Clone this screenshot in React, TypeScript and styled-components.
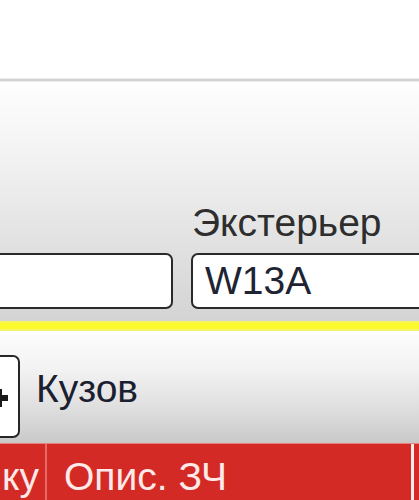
import styled, { createGlobalStyle } from "styled-components";

const GlobalStyle = createGlobalStyle`
  html, body {
    margin: 0;
    padding: 0;
  }
  body {
    background: #fff;
    font-family: "Liberation Sans", Arial, sans-serif;
  }
`;

type Column = { title: string; width?: number; align?: "left" | "right" };

const columns: Column[] = [
  { title: "ку", width: 47, align: "right" },
  { title: "Опис. ЗЧ", width: 367 },
  { title: "" },
];

export default function App() {
  return (
    <>
      <GlobalStyle />
      <Screen>
        <TopArea />
        <Rule />
        <FilterPanel>
          <Field>
            <TextInput readOnly value="" />
          </Field>
          <Field $shift={18}>
            <Label>Экстерьер</Label>
            <TextInput readOnly value="W13A" $wide />
          </Field>
        </FilterPanel>
        <Stripe />
        <TreePanel>
          <TreeNode>
            <Expander>
              <svg width="18" height="18" viewBox="0 0 18 18">
                <rect x="0" y="6" width="18" height="6" fill="#1a1a1a" />
                <rect x="6" y="0" width="6" height="18" fill="#1a1a1a" />
              </svg>
            </Expander>
            <NodeTitle>Кузов</NodeTitle>
          </TreeNode>
        </TreePanel>
        <GridHeader>
          {columns.map((c, i) => (
            <HeaderCell key={i} $width={c.width} $align={c.align} $last={i === columns.length - 1}>
              {c.title}
            </HeaderCell>
          ))}
        </GridHeader>
      </Screen>
    </>
  );
}

const Screen = styled.div`
  width: 419px;
  height: 500px;
  overflow: hidden;
  display: flex;
  flex-direction: column;
`;

const TopArea = styled.div`
  height: 78px;
  flex-shrink: 0;
  background: #fff;
`;

const Rule = styled.div`
  height: 2px;
  flex-shrink: 0;
  background: #d3d3d3;
  border-top: 1px solid #ececec;
  border-bottom: 1px solid #ececec;
`;

const FilterPanel = styled.div`
  height: 239px;
  flex-shrink: 0;
  box-sizing: border-box;
  padding-bottom: 12px;
  display: flex;
  align-items: flex-end;
  background: linear-gradient(#fefefe 0%, #f5f5f5 25%, #e7e7e7 55%, #dcdcdc 80%, #d4d4d4 100%);
`;

const Field = styled.div<{ $shift?: number }>`
  display: flex;
  flex-direction: column;
  flex-shrink: 0;
  margin-left: ${({ $shift }) => ($shift !== undefined ? `${$shift}px` : "-27px")};
`;

const Label = styled.div`
  font-size: 39px;
  line-height: 44px;
  height: 44px;
  margin-bottom: 8px;
  padding-left: 1px;
  color: #2e2e2e;
  white-space: nowrap;
`;

const TextInput = styled.input<{ $wide?: boolean }>`
  box-sizing: border-box;
  width: ${({ $wide }) => ($wide ? "260px" : "200px")};
  height: 56px;
  padding: 0 0 0 12px;
  border: 2px solid #2a2a2a;
  border-radius: 7px;
  background: #fff;
  font-family: "Liberation Sans", Arial, sans-serif;
  font-size: 39px;
  line-height: 52px;
  color: #1f2433;
  outline: none;
`;

const Stripe = styled.div`
  height: 10px;
  flex-shrink: 0;
  background: linear-gradient(#f4f46a, #fbfb2c 30%, #fbfb2c 70%, #f2f27a);
`;

const TreePanel = styled.div`
  height: 112px;
  flex-shrink: 0;
  box-sizing: border-box;
  padding-top: 24px;
  background: linear-gradient(#fdfdfd 0%, #f2f2f2 35%, #dedede 70%, #c9c9c9 100%);
`;

const TreeNode = styled.div`
  display: flex;
  align-items: flex-start;
  gap: 16px;
`;

const Expander = styled.div`
  box-sizing: border-box;
  width: 43px;
  height: 83px;
  margin-left: -23px;
  flex-shrink: 0;
  border: 2px solid #262626;
  border-radius: 7px;
  background: #fff;
  display: flex;
  align-items: center;
  justify-content: center;
  padding-top: 3px;
`;

const NodeTitle = styled.div`
  margin-top: 12px;
  font-size: 39px;
  line-height: 44px;
  color: #1b2030;
`;

const GridHeader = styled.div`
  flex: 1;
  display: flex;
  background: #d42a25;
  border-top: 1px solid #e8807c;
`;

const HeaderCell = styled.div<{ $width?: number; $align?: "left" | "right"; $last?: boolean }>`
  box-sizing: border-box;
  ${({ $width }) => ($width ? `width: ${$width}px; flex-shrink: 0;` : "flex: 1;")}
  padding: 11px ${({ $align }) => ($align === "right" ? "6px" : "0")} 0 ${({ $align }) => ($align === "right" ? "0" : "17px")};
  text-align: ${({ $align }) => $align ?? "left"};
  border-right: ${({ $last, $width }) => ($last ? "none" : $width && $width > 100 ? "3px solid #fbeaea" : "2px solid #e66a65")};
  font-size: 39px;
  line-height: 44px;
  color: #ffe9e9;
  white-space: nowrap;
  overflow: hidden;
`;
